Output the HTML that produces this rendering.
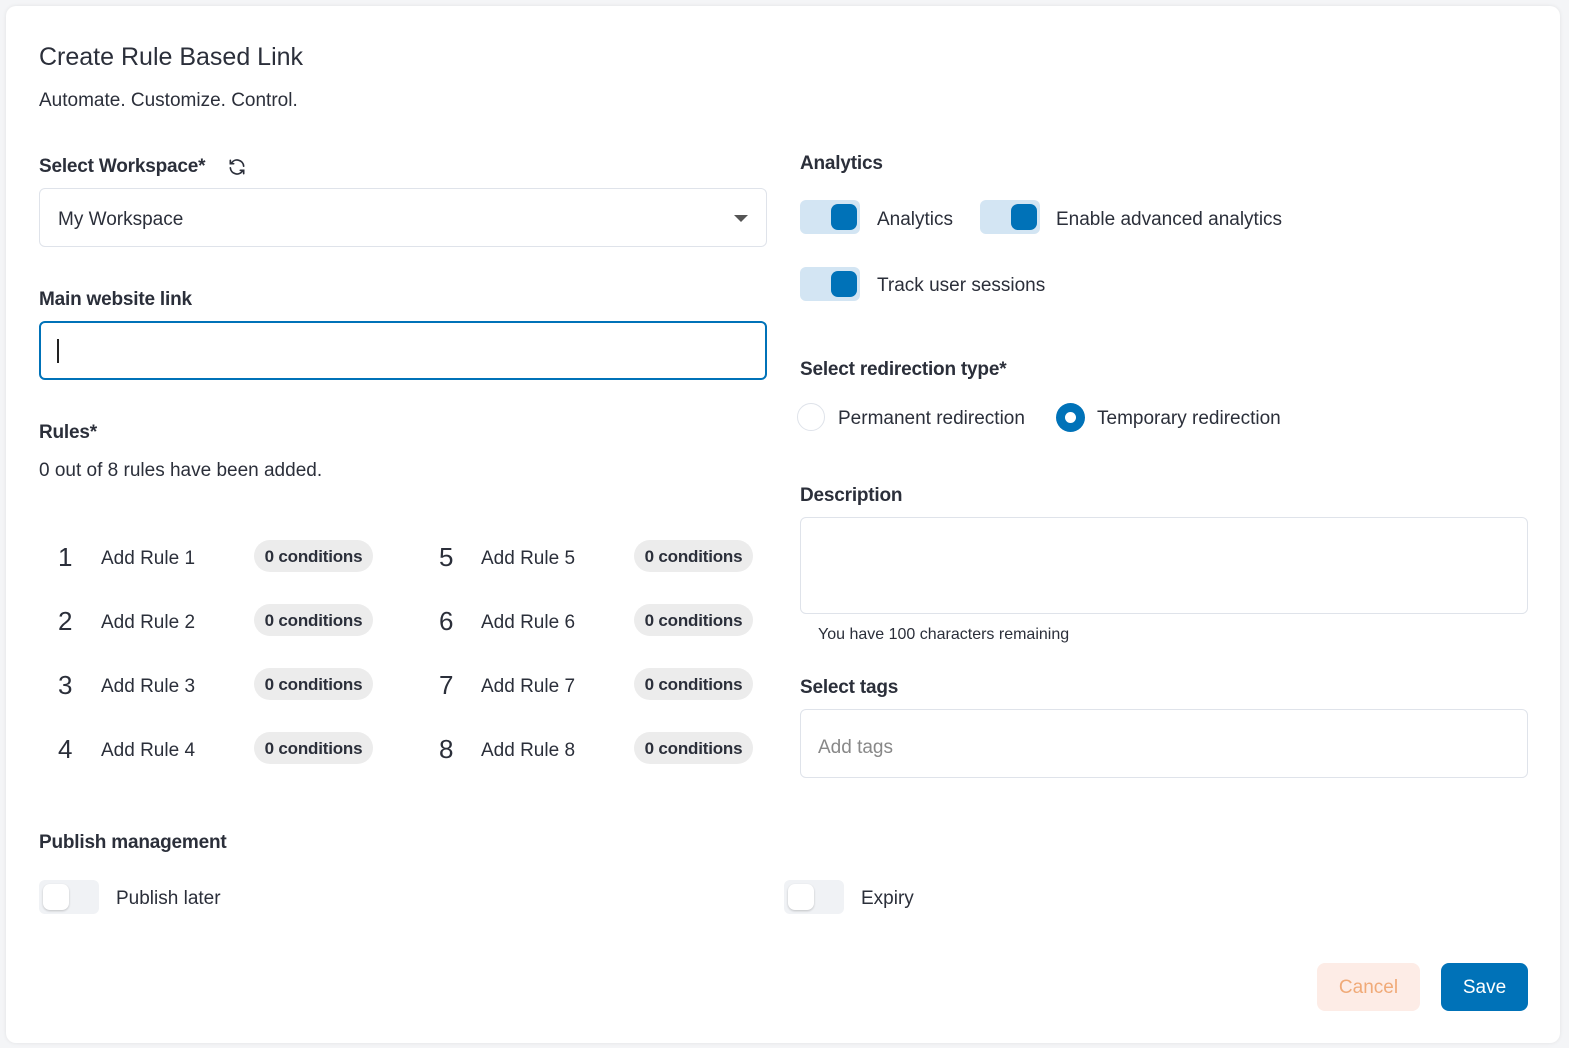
<!DOCTYPE html>
<html><head><meta charset="utf-8"><style>
*{box-sizing:border-box;margin:0;padding:0}
body{width:1569px;height:1048px;background:#f4f5f7;font-family:"Liberation Sans",sans-serif;color:#2b2f3a;position:relative;overflow:hidden}
.card{position:absolute;left:6px;top:6px;width:1554px;height:1037px;background:#fff;border-radius:10px;box-shadow:0 0 4px rgba(0,0,0,.08)}
.a{position:absolute;white-space:nowrap}
.lbl{font-size:19px;font-weight:bold;color:#2b2f3a;letter-spacing:-.2px;margin-top:2px}
.t{font-size:19px;color:#2b2f3a;margin-top:2px}
.box{position:absolute;border:1px solid #dfe3ea;border-radius:6px;background:#fff}
.tg{position:absolute;width:60px;height:34px;border-radius:6px;background:#d3e5f3}
.tg i{position:absolute;right:3px;top:4px;width:26px;height:26px;border-radius:7px;background:#0072b8}
.tg.off{background:#f0f2f5}
.tg.off i{left:4px;right:auto;background:#fff;box-shadow:0 1px 2px rgba(0,0,0,.2)}
.num{font-size:26px;color:#2b2f3a;position:absolute;margin-top:1px}
.pill{position:absolute;width:119px;height:32px;border-radius:16px;background:#ececec;font-size:17px;font-weight:bold;text-align:center;line-height:33px;color:#2b2f3a;letter-spacing:-.2px}
</style></head><body>
<div class="card"></div>
<div class="a" style="left:39px;top:43px;font-size:25px;color:#2b2f3a">Create Rule Based Link</div>
<div class="a t" style="left:39px;top:88px">Automate. Customize. Control.</div>

<div class="a lbl" style="left:39px;top:154px">Select Workspace*</div>
<svg class="a" style="left:227px;top:157px" width="20" height="20" viewBox="0 0 24 24" fill="none" stroke="#2b2f3a" stroke-width="2" stroke-linecap="round"><path d="M20 11a8 8 0 0 0-14.5-4M4 4v4h4"/><path d="M4 13a8 8 0 0 0 14.5 4M20 20v-4h-4"/></svg>
<div class="box" style="left:39px;top:188px;width:728px;height:59px"></div>
<div class="a t" style="left:58px;top:207px">My Workspace</div>
<div class="a" style="left:734px;top:215px;width:0;height:0;border-left:7px solid transparent;border-right:7px solid transparent;border-top:7px solid #555"></div>

<div class="a lbl" style="left:39px;top:287px">Main website link</div>
<div class="box" style="left:39px;top:321px;width:728px;height:59px;border:2px solid #0072b8"></div>
<div class="a" style="left:57px;top:339px;width:2px;height:24px;background:#222"></div>

<div class="a lbl" style="left:39px;top:420px">Rules*</div>
<div class="a t" style="left:39px;top:458px">0 out of 8 rules have been added.</div>

<div class="num" style="left:58px;top:541px">1</div><div class="a t" style="left:101px;top:546px">Add Rule 1</div><div class="pill" style="left:254px;top:540px">0 conditions</div>
<div class="num" style="left:58px;top:605px">2</div><div class="a t" style="left:101px;top:610px">Add Rule 2</div><div class="pill" style="left:254px;top:604px">0 conditions</div>
<div class="num" style="left:58px;top:669px">3</div><div class="a t" style="left:101px;top:674px">Add Rule 3</div><div class="pill" style="left:254px;top:668px">0 conditions</div>
<div class="num" style="left:58px;top:733px">4</div><div class="a t" style="left:101px;top:738px">Add Rule 4</div><div class="pill" style="left:254px;top:732px">0 conditions</div>
<div class="num" style="left:439px;top:541px">5</div><div class="a t" style="left:481px;top:546px">Add Rule 5</div><div class="pill" style="left:634px;top:540px">0 conditions</div>
<div class="num" style="left:439px;top:605px">6</div><div class="a t" style="left:481px;top:610px">Add Rule 6</div><div class="pill" style="left:634px;top:604px">0 conditions</div>
<div class="num" style="left:439px;top:669px">7</div><div class="a t" style="left:481px;top:674px">Add Rule 7</div><div class="pill" style="left:634px;top:668px">0 conditions</div>
<div class="num" style="left:439px;top:733px">8</div><div class="a t" style="left:481px;top:738px">Add Rule 8</div><div class="pill" style="left:634px;top:732px">0 conditions</div>

<div class="a lbl" style="left:800px;top:151px">Analytics</div>
<div class="tg" style="left:800px;top:200px"><i></i></div><div class="a t" style="left:877px;top:207px">Analytics</div>
<div class="tg" style="left:980px;top:200px"><i></i></div><div class="a t" style="left:1056px;top:207px">Enable advanced analytics</div>
<div class="tg" style="left:800px;top:267px"><i></i></div><div class="a t" style="left:877px;top:273px">Track user sessions</div>

<div class="a lbl" style="left:800px;top:357px">Select redirection type*</div>
<div class="a" style="left:797px;top:403px;width:28px;height:28px;border-radius:50%;border:1.5px solid #dfe3ea"></div>
<div class="a t" style="left:838px;top:406px">Permanent redirection</div>
<div class="a" style="left:1056px;top:403px;width:29px;height:29px;border-radius:50%;background:#0072b8"><div style="position:absolute;left:9px;top:9px;width:11px;height:11px;border-radius:50%;background:#fff"></div></div>
<div class="a t" style="left:1097px;top:406px">Temporary redirection</div>

<div class="a lbl" style="left:800px;top:483px">Description</div>
<div class="box" style="left:800px;top:517px;width:728px;height:97px"></div>
<div class="a" style="left:818px;top:626px;font-size:16px;color:#2b2f3a">You have 100 characters remaining</div>

<div class="a lbl" style="left:800px;top:675px">Select tags</div>
<div class="box" style="left:800px;top:709px;width:728px;height:69px"></div>
<div class="a t" style="left:818px;top:735px;color:#888">Add tags</div>

<div class="a lbl" style="left:39px;top:830px">Publish management</div>
<div class="tg off" style="left:39px;top:880px"><i></i></div><div class="a t" style="left:116px;top:886px">Publish later</div>
<div class="tg off" style="left:784px;top:880px"><i></i></div><div class="a t" style="left:861px;top:886px">Expiry</div>

<div class="a" style="left:1317px;top:963px;width:103px;height:48px;border-radius:8px;background:#fdece6;color:#f0aa78;font-size:19px;text-align:center;line-height:50px">Cancel</div>
<div class="a" style="left:1441px;top:963px;width:87px;height:48px;border-radius:8px;background:#0072b8;color:#fff;font-size:19px;text-align:center;line-height:50px">Save</div>
</body></html>
